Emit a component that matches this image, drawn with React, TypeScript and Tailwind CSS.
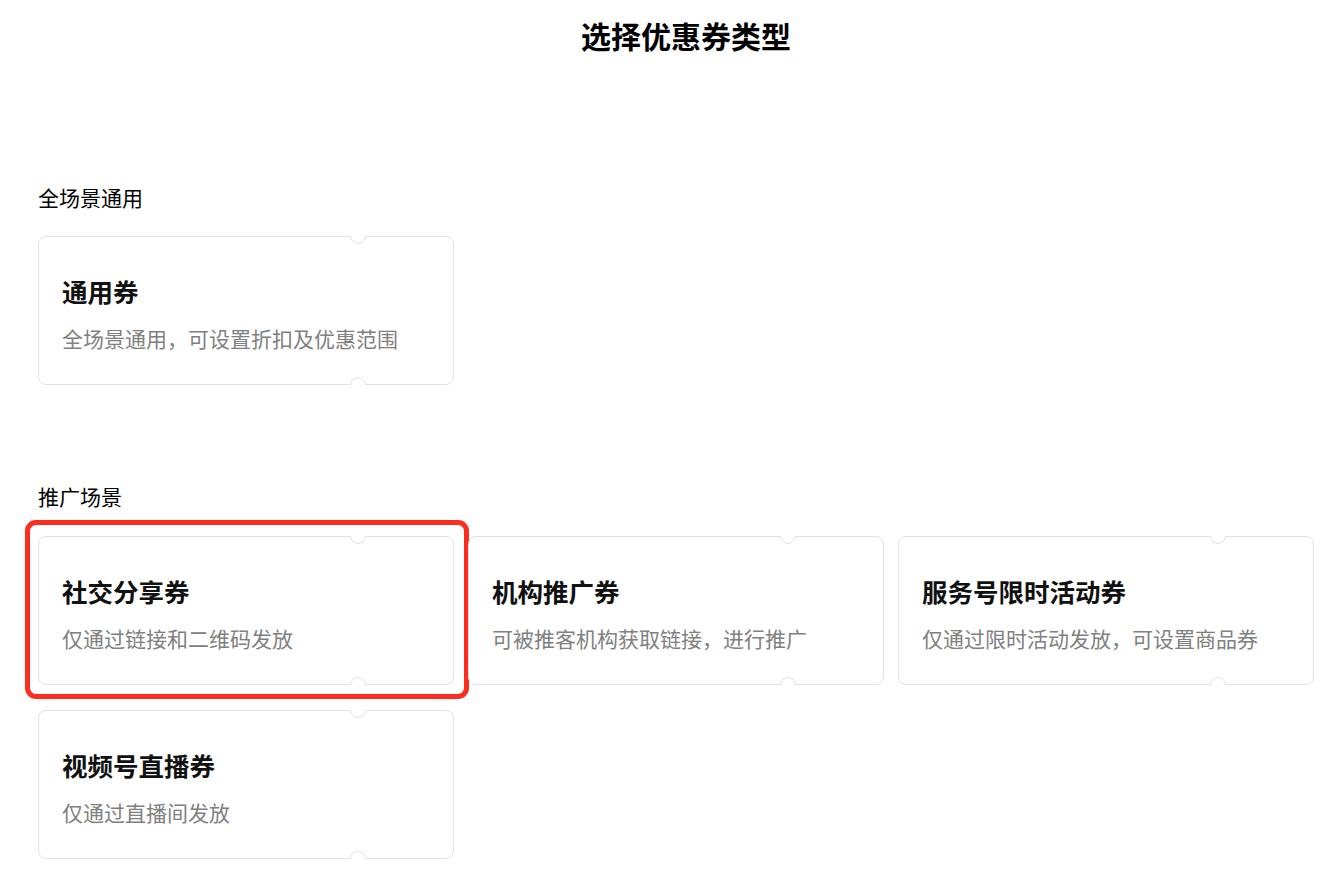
interface Coupon {
  title: string;
  desc: string;
  selected?: boolean;
}

const generalCoupons: Coupon[] = [
  { title: "通用券", desc: "全场景通用，可设置折扣及优惠范围" },
];

const promoCoupons: Coupon[] = [
  { title: "社交分享券", desc: "仅通过链接和二维码发放", selected: true },
  { title: "机构推广券", desc: "可被推客机构获取链接，进行推广" },
  { title: "服务号限时活动券", desc: "仅通过限时活动发放，可设置商品券" },
  { title: "视频号直播券", desc: "仅通过直播间发放" },
];

// half circle bitten out of the ticket edge
const Notch = ({ side }: { side: "top" | "bottom" }) => (
  <div
    className={
      side === "top"
        ? "absolute -top-px left-[311px] h-2 w-4 overflow-hidden"
        : "absolute -bottom-px left-[311px] h-2 w-4 overflow-hidden"
    }
  >
    <div
      className={
        side === "top"
          ? "absolute -top-2 left-0 h-4 w-4 rounded-full border border-[#e2e2e2] bg-white"
          : "absolute top-0 left-0 h-4 w-4 rounded-full border border-[#e2e2e2] bg-white"
      }
    />
  </div>
);

const CouponCard = ({ coupon }: { coupon: Coupon }) => (
  <div className="relative h-[149px] w-[416px] rounded-[8px] border border-[#e2e2e2] bg-white pl-[23px] pt-[41px]">
    <Notch side="top" />
    <Notch side="bottom" />
    <p className="text-[25.5px] font-bold leading-[26px] text-[#111]">
      {coupon.title}
    </p>
    <p className="mt-[24px] text-[21px] leading-[21px] text-[#808080]">
      {coupon.desc}
    </p>
    {coupon.selected && (
      <div className="pointer-events-none absolute -top-[17px] -right-[16px] -bottom-[15px] -left-[14px] rounded-[11px] border-[5px] border-[#fc2c1f]" />
    )}
  </div>
);

const App = () => {
  return (
    <div className="min-h-screen bg-white font-['Noto_Sans_CJK_SC','Noto_Sans',sans-serif] text-black">
      <h1 className="pt-[20px] pl-[32px] text-center text-[30px] font-bold leading-[30px]">
        选择优惠券类型
      </h1>
      <div className="pl-[38px]">
        <p className="mt-[137px] text-[21px] leading-[21px]">全场景通用</p>
        <div className="mt-[28px] grid grid-cols-[repeat(3,416px)] gap-x-[14px] gap-y-[25px]">
          {generalCoupons.map((c, i) => (
            <CouponCard key={i} coupon={c} />
          ))}
        </div>
        <p className="mt-[101px] text-[21px] leading-[21px]">推广场景</p>
        <div className="mt-[29px] grid grid-cols-[repeat(3,416px)] gap-x-[14px] gap-y-[25px] pb-[13px]">
          {promoCoupons.map((c, i) => (
            <CouponCard key={i} coupon={c} />
          ))}
        </div>
      </div>
    </div>
  );
};

export default App;
